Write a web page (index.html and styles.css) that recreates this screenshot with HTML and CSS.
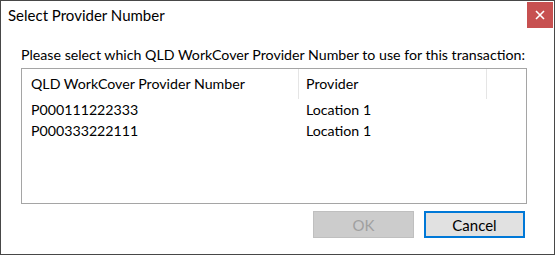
FILE: index.html
```html
<!DOCTYPE html>
<html lang="en">
<head>
  <meta charset="UTF-8" />
  <title>Select Provider Number</title>
  <link rel="stylesheet" href="styles.css">
</head>
<body>
  <div class="window">
    <div class="titlebar">
      <span class="title">Select Provider Number</span>
      <button class="close-btn" aria-label="Close">
        <svg width="10" height="10" viewBox="0 0 10 10">
          <path d="M1 1 L9 9 M9 1 L1 9" stroke="#fff" stroke-width="1.6" />
        </svg>
      </button>
    </div>

    <div class="content">
      <p class="prompt">Please select which QLD WorkCover Provider Number to use for this transaction:</p>

      <div class="listview">
        <div class="list-header">
          <div class="col col-number">QLD WorkCover Provider Number</div>
          <div class="col col-provider">Provider</div>
          <div class="col col-fill"></div>
        </div>
        <div class="list-row">
          <div class="col col-number">P000111222333</div>
          <div class="col col-provider">Location 1</div>
        </div>
        <div class="list-row">
          <div class="col col-number">P000333222111</div>
          <div class="col col-provider">Location 1</div>
        </div>
      </div>

      <div class="buttons">
        <button class="btn" disabled>OK</button>
        <button class="btn btn-default">Cancel</button>
      </div>
    </div>
  </div>
</body>
</html>
```

FILE: styles.css
```css
body {
  margin: 0;
  font-family: Lato, 'Liberation Sans', sans-serif;
  font-size: 14.2px;
  color: #000;
  background: #fff;
}

.window {
  width: 555px;
  height: 255px;
  box-sizing: border-box;
  border: 1px solid #474747;
  display: flex;
  flex-direction: column;
}

.titlebar {
  height: 28px;
  display: flex;
  justify-content: space-between;
  align-items: flex-start;
}

.title {
  padding: 5px 0 0 7px;
  font-size: 15px;
  line-height: 18px;
}

.close-btn {
  width: 26px;
  height: 26px;
  margin: 1px 1px 0 0;
  border: none;
  padding: 0;
  background-color: #c75050;
  display: flex;
  align-items: center;
  justify-content: center;
}

.content {
  padding: 0 0 0 20px;
}

.prompt {
  margin: 17px 0 4px 0;
  line-height: 18px;
}

.listview {
  width: 506px;
  height: 136px;
  box-sizing: border-box;
  border: 1px solid #a5a5a5;
  overflow: hidden;
}

.list-header {
  display: flex;
  height: 30px;
  align-items: stretch;
}

.list-header .col {
  border-right: 1px solid #e5e5e5;
  padding-top: 6px;
}

.list-header .col-fill {
  flex: 1;
  border-right: none;
}

.list-row {
  display: flex;
  line-height: 21px;
}

.col {
  box-sizing: border-box;
  white-space: nowrap;
}

.col-number {
  width: 277px;
  padding-left: 9px;
}

.col-provider {
  width: 188px;
  padding-left: 7px;
}

.buttons {
  display: flex;
  justify-content: flex-end;
  gap: 10px;
  margin: 7px 29px 0 0;
}

.btn {
  width: 101px;
  height: 27px;
  font-family: inherit;
  font-size: 15px;
  border: 1px solid #adadad;
  background-color: #e1e1e1;
  color: #000;
  padding: 0;
}

.btn:disabled {
  background-color: #cccccc;
  border-color: #bfbfbf;
  color: #a0a0a0;
}

.btn-default {
  border: 2px solid #0078d7;
}
```
